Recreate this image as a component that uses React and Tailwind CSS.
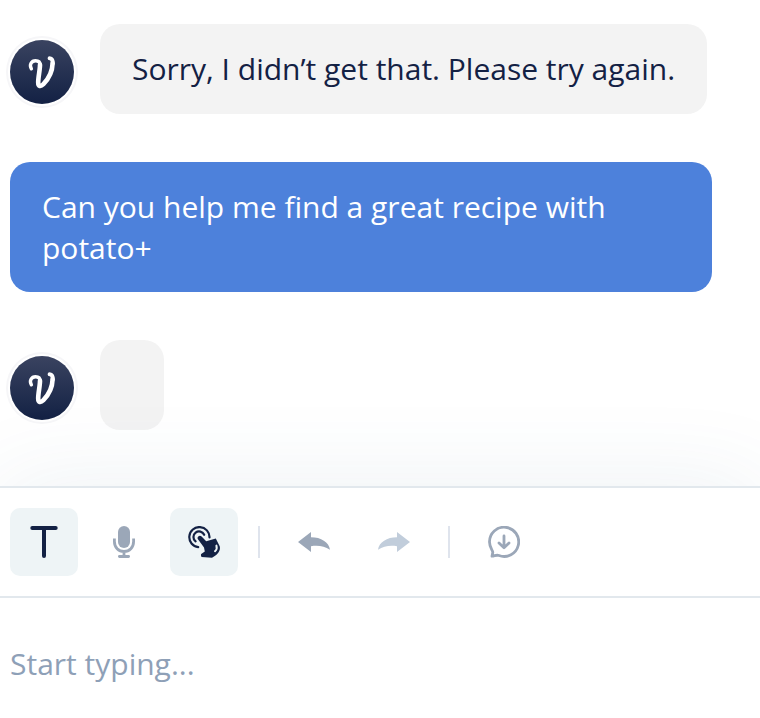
import React, { useState } from 'react';

function Avatar() {
  return (
    <div className="size-16 shrink-0 rounded-full bg-linear-to-b from-[#3a4360] to-[#132144] ring-2 ring-white shadow-[0_0_0_4px_#f6f6f8]">
      <svg viewBox="0 0 64 64" className="size-16" fill="none" stroke="#fff" strokeLinecap="round" strokeLinejoin="round">
        <path strokeWidth="3.4" d="M21.4 28.8C19 24.8 21.4 20.7 25.6 20.7C28.8 20.7 30.2 22.4 30.2 25.2" />
        <path strokeWidth="4.6" d="M30 24.8C30 30 28.2 37 28.2 42.4C28.2 46.6 30.6 47 33.4 44.2C38.4 39 42.4 31 42.6 23.4" />
        <path strokeWidth="4" d="M39.6 18.2C42 18.2 42.9 20.4 42.7 23.4" />
      </svg>
    </div>
  );
}

function BotMessage({ children }) {
  return (
    <div className="flex items-end gap-[26px]">
      <div className="pb-2.5">
        <Avatar />
      </div>
      <div className="h-[90px] rounded-[20px] bg-[#f3f3f3] px-8 py-6 text-[#132144]">{children}</div>
    </div>
  );
}

function ToolButton({ label, active, onClick, children }) {
  return (
    <button
      aria-label={label}
      onClick={onClick}
      className={`flex size-[68px] items-center justify-center rounded-[10px] ${
        active ? 'bg-[#eef4f6] text-[#132144]' : 'text-[#9ba7b8]'
      }`}
    >
      {children}
    </button>
  );
}

function Divider() {
  return <div className="h-8 w-0.5 bg-[#dfe4ed]" />;
}

function Toolbar() {
  const [textMode, setTextMode] = useState(true);
  const [touchMode, setTouchMode] = useState(true);

  return (
    <div className="relative flex h-[112px] items-center border-y-2 border-[#e2e8ed] bg-white px-2.5 shadow-[0_0_96px_rgba(50,95,135,0.09)]">
      <ToolButton label="Text" active={textMode} onClick={() => setTextMode(!textMode)}>
        <svg viewBox="0 0 32 32" className="size-8" fill="none" stroke="currentColor" strokeWidth="4" strokeLinecap="round">
          <path d="M4.3 2H27.7M16 2V30" />
        </svg>
      </ToolButton>

      <div className="ml-3 mr-3">
        <ToolButton label="Voice">
          <svg viewBox="0 0 32 32" className="size-8" fill="none" stroke="currentColor" strokeWidth="2.8">
            <rect x="10" y="0" width="12" height="22" rx="6" fill="currentColor" stroke="none" />
            <path d="M6.4 12.4V15.5C6.4 21.3 10.5 25.5 16 25.5S25.6 21.3 25.6 15.5V12.4M16 25.5V30" />
            <path strokeLinecap="round" d="M11.4 30.5H20.6" />
          </svg>
        </ToolButton>
      </div>

      <ToolButton label="Touch" active={touchMode} onClick={() => setTouchMode(!touchMode)}>
        <svg viewBox="0 0 32 32" className="size-8" fill="none" stroke="currentColor" strokeWidth="2.2" strokeLinecap="round">
          <path d="M10.2 21.2A10.1 10.1 0 1 1 21.5 11.5" />
          <path d="M7.6 15.4A5.6 5.6 0 1 1 16.2 8.8" />
          <path fill="currentColor" stroke="none" d="M9.8 13C8.6 10.8 11.8 8.5 13.6 10.5L18.2 15.2L27.8 12.4L31.7 20.2C33 24.8 29.2 29.2 24 31.8L13.6 31.1C12.8 29.8 12.8 28.6 13.2 27.9L16.8 25.6L16 21.6Z" />
          <path stroke="#eef4f6" strokeWidth="2" d="M28.4 19.6C29.2 22 28.4 24 27 25.2" />
        </svg>
      </ToolButton>

      <div className="ml-5">
        <Divider />
      </div>

      {/* Undo / redo */}
      <div className="ml-5 flex gap-3">
        <ToolButton label="Undo">
          <svg viewBox="0 0 32 20" className="h-5 w-8" fill="currentColor">
            <path d="M0 10L13 0V5.2C23 5.2 31 10 32 17.8C26.5 14 20 13.2 13 14.2V20Z" />
          </svg>
        </ToolButton>
        <ToolButton label="Redo">
          <svg viewBox="0 0 32 20" className="h-5 w-8 text-[#c1cddb]" fill="currentColor">
            <path d="M32 10L19 0V5.2C9 5.2 1 10 0 17.8C5.5 14 12 13.2 19 14.2V20Z" />
          </svg>
        </ToolButton>
      </div>

      <div className="ml-5 mr-5">
        <Divider />
      </div>

      <ToolButton label="Save transcript">
        <svg viewBox="0 0 32 32" className="size-8" fill="none" stroke="currentColor" strokeWidth="2.8" strokeLinecap="round" strokeLinejoin="round">
          <path d="M4 30.2L4.8 26.2C4.8 24.5 1.5 21.5 1.5 16A14.6 14.6 0 1 1 11 29.5C8.5 28.6 7 29.8 4 30.2Z" />
          <path d="M16 10V21.5M11 17L16 21.8L21 17" />
        </svg>
      </ToolButton>
    </div>
  );
}

function App() {
  const [message, setMessage] = useState('');

  return (
    <div className="flex h-[718px] w-[760px] flex-col overflow-hidden bg-white font-['Open_Sans',sans-serif] text-[30px] leading-[41px]">
      <div className="flex h-[486px] shrink-0 flex-col gap-12 px-2.5 pt-6">
        <BotMessage>Sorry, I didn’t get that. Please try again.</BotMessage>
        <div className="w-[702px] rounded-[20px] bg-[#4d81db] px-8 py-6 text-white">
          Can you help me find a great recipe with potato+
        </div>
        <BotMessage />
      </div>

      <Toolbar />

      <input
        value={message}
        onChange={(e) => setMessage(e.target.value)}
        placeholder="Start typing..."
        className="relative min-h-0 w-full flex-1 bg-white px-2.5 pt-2.5 text-[#132144] outline-none placeholder:text-[#8ea0b7]"
      />
    </div>
  );
}

export default App;
